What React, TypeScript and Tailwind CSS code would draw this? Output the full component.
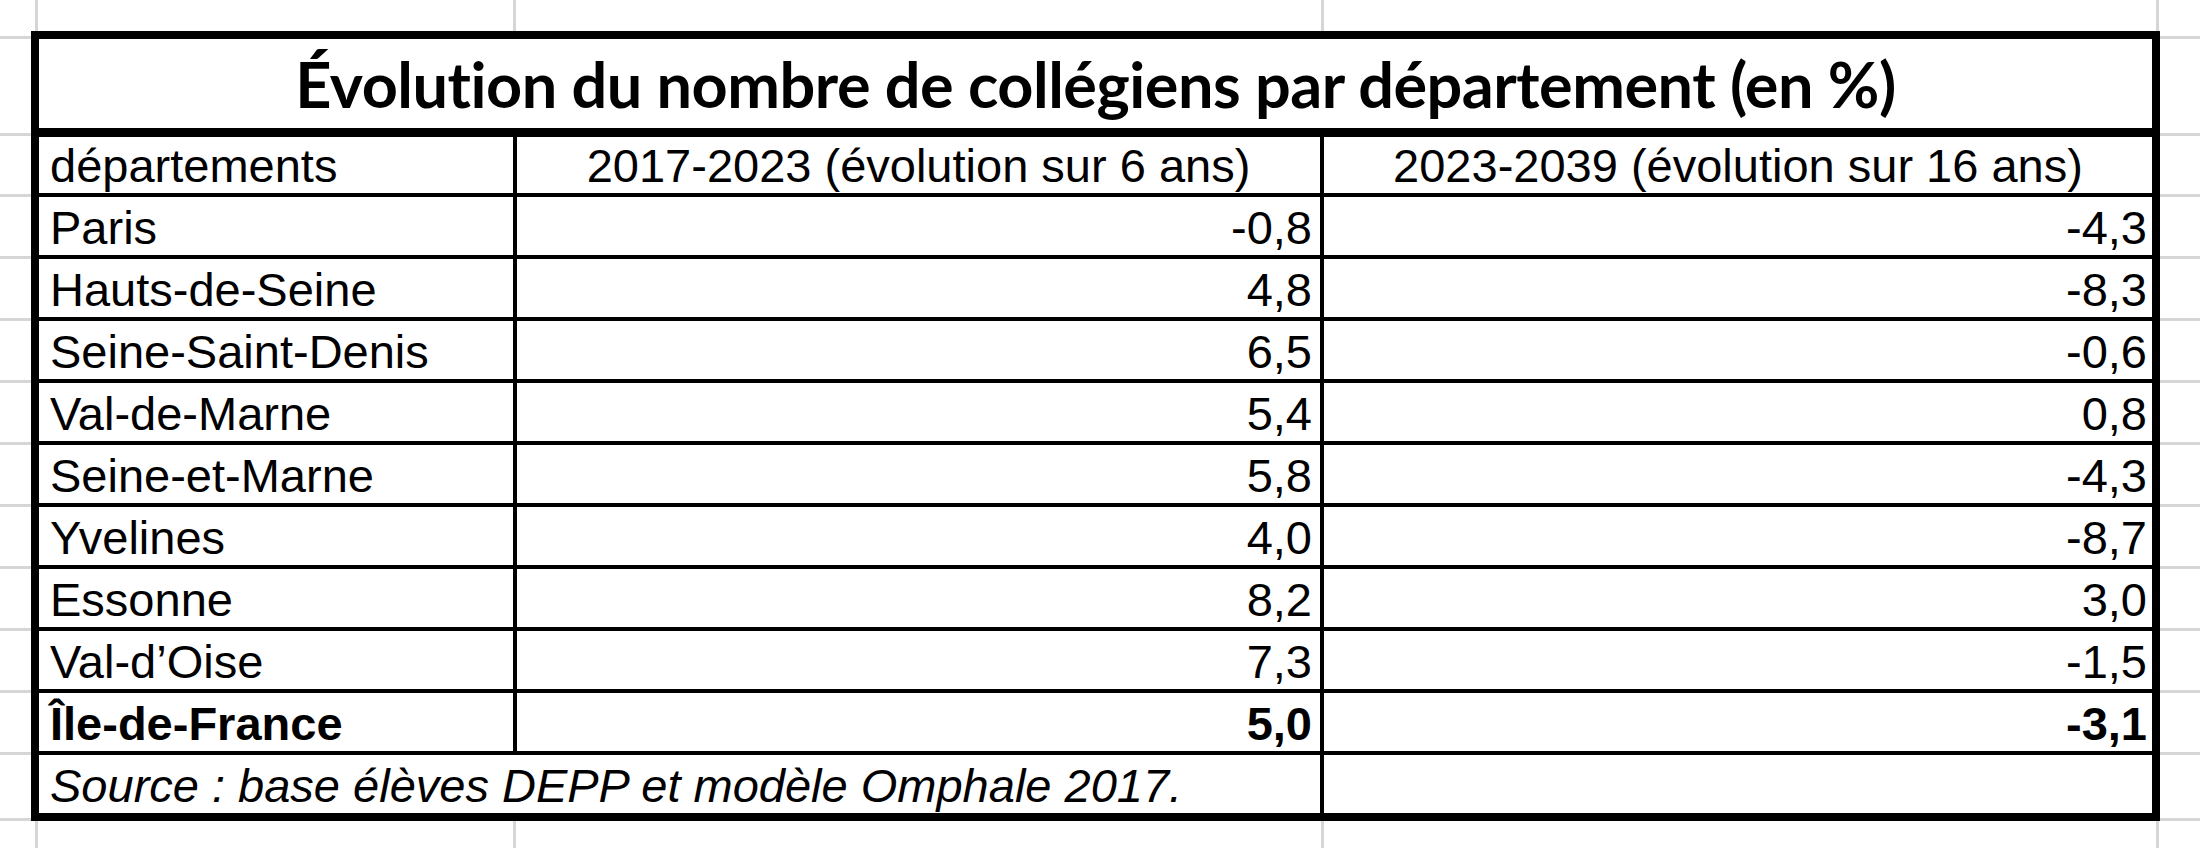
import React from 'react'

const rows = [
  { name: 'Paris', a: '-0,8', b: '-4,3' },
  { name: 'Hauts-de-Seine', a: '4,8', b: '-8,3' },
  { name: 'Seine-Saint-Denis', a: '6,5', b: '-0,6' },
  { name: 'Val-de-Marne', a: '5,4', b: '0,8' },
  { name: 'Seine-et-Marne', a: '5,8', b: '-4,3' },
  { name: 'Yvelines', a: '4,0', b: '-8,7' },
  { name: 'Essonne', a: '8,2', b: '3,0' },
  { name: 'Val-d’Oise', a: '7,3', b: '-1,5' },
  { name: 'Île-de-France', a: '5,0', b: '-3,1', bold: true },
]

// spreadsheet gridlines showing around the table
function ColumnStrip({ h }: { h: string }) {
  return (
    <div className={`flex ${h}`}>
      <div className="w-[38px] shrink-0 border-r-[3px] border-[#d6d6d6]" />
      <div className="w-[478px] shrink-0 border-r-[3px] border-[#d6d6d6]" />
      <div className="w-[808px] shrink-0 border-r-[3px] border-[#d6d6d6]" />
      <div className="w-[835px] shrink-0 border-r-[3px] border-[#d6d6d6]" />
      <div className="flex-1" />
    </div>
  )
}

function RowGutter({ w }: { w: string }) {
  return (
    <div className={`flex flex-col shrink-0 ${w}`}>
      <div className="h-[8px] border-b-[3px] border-[#d6d6d6]" />
      <div className="h-[97px] border-b-[3px] border-[#d6d6d6]" />
      <div className="h-[61px] border-b-[3px] border-[#d6d6d6]" />
      {rows.map(r => (
        <div key={r.name} className="h-[62px] border-b-[3px] border-[#d6d6d6]" />
      ))}
      <div className="h-[66px] border-b-[3px] border-[#d6d6d6]" />
    </div>
  )
}

export default function App() {
  return (
    <div className="w-[2200px] h-[848px] bg-white flex flex-col overflow-hidden text-black" style={{ fontFamily: '"Liberation Sans", Arial, sans-serif' }}>
      <ColumnStrip h="h-[31px]" />

      <div className="flex">
        <RowGutter w="w-[31px]" />

        {/* Table */}
        <div className="w-[2129px] h-[790px] shrink-0 border-[8px] border-black flex flex-col text-[47px] leading-none">
          <div className="h-[98px] shrink-0 border-b-[9px] border-black flex items-center justify-center">
            <span className="font-bold text-[63px] tracking-[-0.5px]" style={{ fontFamily: 'Lato, "Open Sans", sans-serif' }}>
              Évolution du nombre de collégiens par département (en %)
            </span>
          </div>

          <div className="h-[60px] shrink-0 border-b-[4px] border-black flex">
            <div className="w-[478px] shrink-0 border-r-[4px] border-black flex items-end pl-[11px] pb-[4px]">départements</div>
            <div className="w-[807px] shrink-0 border-r-[4px] border-black flex items-end justify-center pb-[4px]">2017-2023 (évolution sur 6 ans)</div>
            <div className="flex-1 flex items-end justify-center pb-[4px]">2023-2039 (évolution sur 16 ans)</div>
          </div>

          {rows.map(r => (
            <div key={r.name} className={`h-[62px] shrink-0 border-b-[4px] border-black flex ${r.bold ? 'font-bold' : ''}`}>
              <div className="w-[478px] shrink-0 border-r-[4px] border-black flex items-end pl-[11px] pb-[4px]">{r.name}</div>
              <div className="w-[807px] shrink-0 border-r-[4px] border-black flex items-end justify-end pr-[8px] pb-[4px]">{r.a}</div>
              <div className="flex-1 flex items-end justify-end pr-[5px] pb-[4px]">{r.b}</div>
            </div>
          ))}

          <div className="flex-1 flex">
            <div className="w-[1285px] shrink-0 border-r-[4px] border-black flex items-end pl-[11px] pb-[4px] italic">
              Source : base élèves DEPP et modèle Omphale 2017.
            </div>
            <div className="flex-1" />
          </div>
        </div>

        <RowGutter w="w-[40px]" />
      </div>

      <ColumnStrip h="flex-1" />
    </div>
  )
}
